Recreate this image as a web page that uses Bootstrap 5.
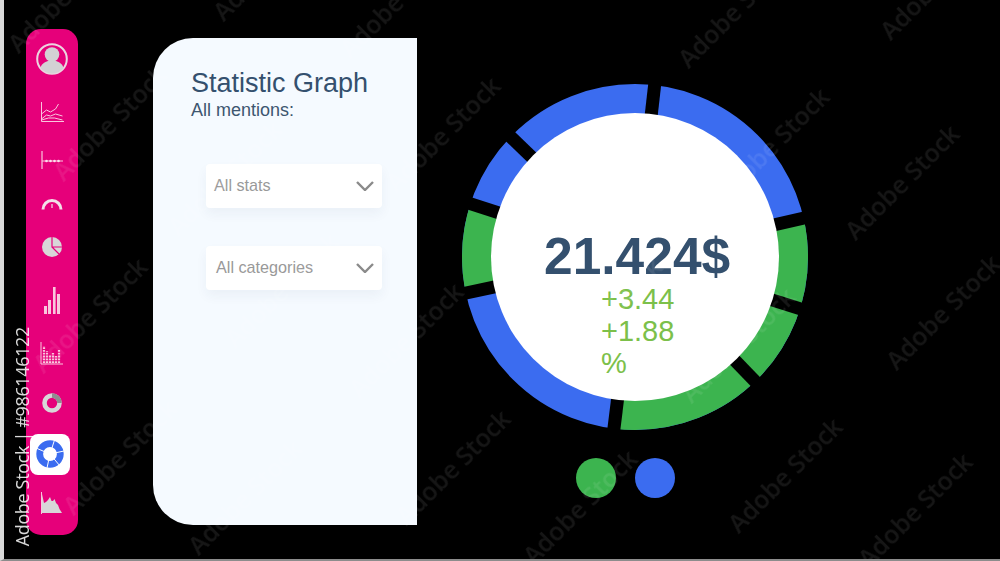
<!DOCTYPE html>
<html lang="en">
<head>
  <meta charset="UTF-8">
  <title>Statistic Graph</title>
  <link href="https://cdn.jsdelivr.net/npm/bootstrap@5.3.2/dist/css/bootstrap.min.css" rel="stylesheet">
  <style>
    body { background: #000; height: 561px; overflow: hidden; font-family: "Liberation Sans", Arial, sans-serif; }
    .stage { position: relative; height: 561px; border-left: 4px solid #d9d9d9; border-bottom: 2px solid #8c8c8c; overflow: hidden; }

    .side-rail { width: 52px; height: 506px; margin: 29px 0 0 22px; background: #e6007a; border-radius: 15px; display: grid; grid-template-rows: 60px 46px 50px 36px 52px 54px 52px 48px 54px 44px 1fr; justify-items: center; align-items: center; flex-shrink: 0; }
    .rail-tile { width: 40px; height: 41px; margin-right: 4px; background: #fff; border-radius: 8px; }

    .side-panel { width: 264px; height: 487px; margin: 38px 0 0 75px; padding: 30px 34px 0 38px; background: #f5faff; border-radius: 40px 0 0 40px; flex-shrink: 0; }
    .panel-title { font-size: 27px; line-height: 31px; color: #34506e; margin: 0 0 1px; }
    .panel-sub { font-size: 18px; line-height: 21px; color: #3d5670; margin: 0 0 43px; }
    .pick-box { width: 176px; height: 44px; margin: 0 0 38px 15px; padding: 0 8px 1px; background: #fff; border: 0; border-radius: 4px; box-shadow: 0 6px 12px rgba(40, 60, 90, .05); font-size: 16.2px; color: #999; }
    .pick-box:hover, .pick-box:active { background: #fff; color: #999; }
    .pick-wide { padding-left: 10px; }

    .chart-col { width: 346px; margin: 84px 0 0 45px; flex-shrink: 0; }
    .ring-wrap { position: relative; width: 346px; height: 346px; }
    .ring-hole { position: absolute; inset: 29px; background: #fff; padding: 117px 0 0 110px; }
    .ring-total { font-size: 51.5px; line-height: 52px; font-weight: 700; color: #34506e; margin-left: -57px; white-space: nowrap; }
    .ring-delta { width: 90px; font-size: 29px; line-height: 32px; color: #7cc04a; margin-top: 1px; }
    .legend-dots { margin: 28px 0 0 114px; gap: 19px; }
    .legend-dot { width: 40px; height: 40px; }
    .dot-green { background: #3cb44f; }
    .dot-blue { background: #3b6cf0; }

    .stock-id { position: absolute; left: 8px; bottom: 13px; writing-mode: vertical-rl; transform: rotate(180deg); font-family: "Open Sans", sans-serif; font-size: 18px; line-height: 20px; letter-spacing: -.35px; color: rgba(255, 255, 255, .85); white-space: nowrap; }
    .water-mark { position: absolute; transform: translate(-50%, -50%) rotate(-45deg); font-family: "Open Sans", sans-serif; font-weight: 600; font-size: 25px; color: rgba(255, 255, 255, .085); filter: blur(.6px); white-space: nowrap; pointer-events: none; }
  </style>
</head>
<body>

  <div class="stage d-flex align-items-start" id="stage">

    <nav class="side-rail">
      <svg width="32" height="32" viewBox="0 0 32 32">
        <circle cx="16" cy="16" r="14.8" fill="none" stroke="#ecd5e0" stroke-width="2"/>
        <circle cx="16" cy="11.5" r="7.3" fill="#d3d1d4"/>
        <path d="M4.5 25c1-5 6-6.500 8.500-7.500h6c2.500 1 7.500 2.500 8.500 7.500-3 3.500-7 5.500-11.500 5.500S7.500 28.500 4.500 25z" fill="#d3d1d4"/>
      </svg>
      <svg width="24" height="22" viewBox="0 0 24 22" fill="none" stroke="#f9c6dd" stroke-width="1">
        <path d="M1.500 1v19.500H24"/>
        <path d="M1.500 18l5-4 4 1 5-2 7 2"/>
        <path d="M1.500 13l5-4 4 2 5-3 3-5"/>
        <path d="M1.500 19l7-2 6 0 8 2"/>
      </svg>
      <svg width="24" height="22" viewBox="0 0 24 22">
        <path d="M2 2v18M2 12h21" stroke="#f9c6dd" stroke-width="1.200" fill="none"/>
        <circle cx="6.500" cy="12" r="1.300" fill="#fbe0ec"/><circle cx="10.500" cy="12" r="1.300" fill="#fbe0ec"/>
        <circle cx="14.500" cy="12" r="1.300" fill="#fbe0ec"/><circle cx="18.500" cy="12" r="1.300" fill="#fbe0ec"/>
      </svg>
      <svg width="22" height="13" viewBox="0 0 22 13">
        <path d="M2 12.500a9 9 0 0 1 18 0" fill="none" stroke="#f2e0e8" stroke-width="3"/>
        <path d="M11 7v4" stroke="#f2e0e8" stroke-width="1.200"/>
      </svg>
      <svg width="22" height="22" viewBox="0 0 22 22">
        <circle cx="11" cy="11" r="10" fill="#d8d6d8"/>
        <path d="M11 0v11h11M11 11l7.500 7.500" fill="none" stroke="#e6007a" stroke-width="1.200"/>
      </svg>
      <svg width="18" height="28" viewBox="0 0 18 28" fill="#f9c5dc">
        <rect x="1" y="20" width="3" height="8"/><rect x="5" y="14" width="3" height="14"/>
        <rect x="10" y="1" width="2.600" height="27"/><rect x="14" y="8" width="3" height="20"/>
      </svg>
      <svg width="24" height="24" viewBox="0 0 24 24" fill="none" stroke="#f9c5dc">
        <path d="M1 1v22h22" stroke-width="1"/>
        <g stroke-width="2.200" stroke-dasharray="1.800 1">
          <path d="M4 22V5M7 22V10M10 22V14M13 22V12M16 22V15M19 22V9"/>
        </g>
      </svg>
      <svg width="22" height="22" viewBox="0 0 22 22" fill="none" stroke-width="4.600">
        <circle cx="11" cy="11" r="7.500" stroke="#d8d6d8"/>
        <path d="M11 3.500a7.500 7.500 0 0 1 7.500 7.500" stroke="#8f8d90"/>
      </svg>
      <div class="rail-tile d-flex align-items-center justify-content-center">
        <svg width="28" height="28" viewBox="0 0 28 28" fill="none">
          <circle cx="14" cy="14" r="10.300" stroke="#3b6cf0" stroke-width="6.800"/>
          <path d="M14 14L18.500 0M14 14L28 11M14 14L24 26M14 14L11 28M14 14L0 8" stroke="#fff" stroke-width="1"/>
        </svg>
      </div>
      <svg width="24" height="24" viewBox="0 0 24 24">
        <path d="M1.500 1v22" stroke="#f9c5dc" stroke-width="1"/>
        <path d="M2 22V3l2 9 2-1 2-2 2-3 1.500 4h1.500l1.500-2 1.500 4 2 2 1.500 4 2.500 4z" fill="#d8d6d8"/>
      </svg>
    </nav>

    <section class="side-panel">
      <h1 class="panel-title fw-normal">Statistic Graph</h1>
      <p class="panel-sub">All mentions:</p>
      <button type="button" class="pick-box btn d-flex justify-content-between align-items-center">
        <span>All stats</span>
        <svg width="18" height="10" viewBox="0 0 18 10"><path d="M1 1l8 8 8-8" fill="none" stroke="#8a8a8a" stroke-width="2.400"/></svg>
      </button>
      <button type="button" class="pick-box pick-wide btn d-flex justify-content-between align-items-center">
        <span>All categories</span>
        <svg width="18" height="10" viewBox="0 0 18 10"><path d="M1 1l8 8 8-8" fill="none" stroke="#8a8a8a" stroke-width="2.400"/></svg>
      </button>
    </section>

    <section class="chart-col">
      <div class="ring-wrap">
        <svg class="position-absolute top-0 start-0" width="346" height="346" viewBox="0 0 346 346" fill="none">
          <g transform="rotate(-90 173 173)" stroke-width="30">
            <circle cx="173" cy="173" r="158" stroke="#3b6cf0"/>
            <circle cx="173" cy="173" r="158" stroke="#3cb44f" pathLength="360" stroke-dasharray="110 250" stroke-dashoffset="-77"/>
            <circle cx="173" cy="173" r="158" stroke="#3cb44f" pathLength="360" stroke-dasharray="30 330" stroke-dashoffset="-258"/>
          </g>
          <g stroke="#000" stroke-width="13">
            <path d="M173 173L193.900 -10"/>
            <path d="M173 173L352.400 131.600"/>
            <path d="M173 173L348.500 228"/>
            <path d="M173 173L300.800 305.300"/>
            <path d="M173 173L150.600 355.600"/>
            <path d="M173 173L-8 211.500"/>
            <path d="M173 173L-3 116"/>
            <path d="M173 173L40.700 45.100"/>
          </g>
        </svg>
        <div class="ring-hole rounded-circle">
          <div class="ring-total">21.424$</div>
          <div class="ring-delta">+3.44 +1.88 %</div>
        </div>
      </div>
      <div class="legend-dots d-flex">
        <span class="legend-dot dot-green rounded-circle"></span>
        <span class="legend-dot dot-blue rounded-circle"></span>
      </div>
    </section>

    <div class="stock-id">Adobe Stock | #986146122</div>
  </div>

  <script>
    // watermark centres, page pixels
    const marcas = [
      [65,-5],[270,-37],[397,0],[735,10],[937,-18],
      [110,123],[225,178],[443,134],[568,182],[772,145],[902,182],
      [90,315],[282,290],[406,340],[605,315],[738,345],[943,312],
      [120,457],[245,497],[453,467],[580,507],[785,475],[915,510]
    ];
    const stage = document.getElementById('stage');
    marcas.forEach(m => {
      stage.innerHTML += `<span class="water-mark" style="left:${m[0] - 4}px;top:${m[1]}px">Adobe Stock</span>`;
    });
  </script>
  <script src="https://cdn.jsdelivr.net/npm/bootstrap@5.3.2/dist/js/bootstrap.bundle.min.js"></script>
</body>
</html>
